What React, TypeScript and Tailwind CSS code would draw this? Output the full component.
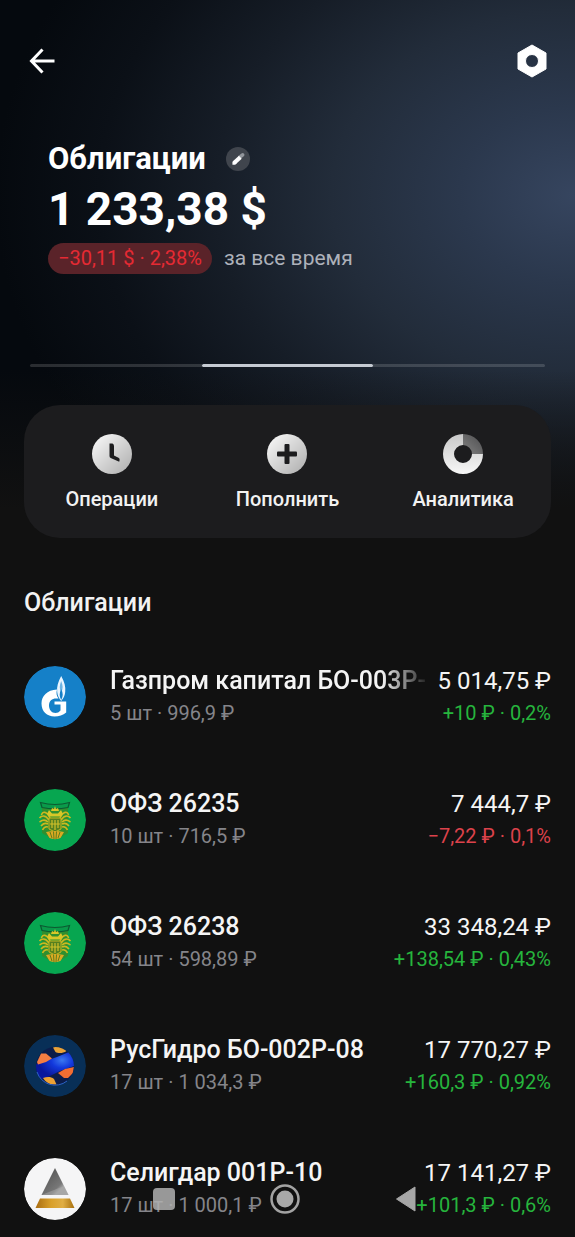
import { ReactNode } from "react";
import clsx from "clsx";

type Bond = {
  name: string;
  details: string;
  value: string;
  change: string;
  positive: boolean;
  longName?: boolean;
  logo: ReactNode;
};

function GazpromLogo() {
  return (
    <svg viewBox="0 0 62 62" className="size-full" aria-hidden="true">
      <circle cx="31" cy="31" r="31" fill="#1580c8" />
      <path
        d="M33 23.500C23 24 17.500 30 17.500 37.500C17.500 45.500 23 50.500 30.500 50.500C35 50.500 39 49 42.200 46.500V35.500H30.500V38.500H36.500V44.500C35 46.200 33.500 47 31.500 47C27.500 47 25 43.500 25 39.500C25 35 28 32.500 32 32.500H34.500C32.500 30 32 27 33 23.500Z"
        fill="#fff"
      />
      <path
        d="M37.200 10C40.500 16 41.800 20.500 41.200 26C40.800 30 39.500 32.500 37.200 35C34.900 32.500 33.600 30 33.200 26C32.600 20.500 34 16 37.200 10Z"
        fill="#e9f5ff"
      />
      <path d="M37.200 15C39 19.500 39.200 23 37.200 26C35.200 23 35.400 19.500 37.200 15Z" fill="#6bb3e2" />
      <path d="M37.200 23C39.200 27 39.200 30.500 37.200 34C35.200 30.500 35.200 27 37.200 23Z" fill="#1580c8" />
    </svg>
  );
}

function MinfinLogo() {
  return (
    <svg viewBox="0 0 62 62" className="size-full" aria-hidden="true">
      <circle cx="31" cy="31" r="31" fill="#07a650" />
      {/* shield and ribbon */}
      <path d="M18 15H44V44L37 48H25L18 44Z" fill="#2f8f2f" />
      <path
        d="M16.500 13.500Q31 17.500 45.500 13.500L44 18.500Q31 21 18 18.500Z"
        fill="#0a9a4a"
        stroke="#0b5a31"
        strokeWidth="1.200"
      />
      {/* wings */}
      <g fill="none" stroke="#cdb820" strokeWidth="1.600">
        <path d="M26 29C23 22 18 22 17.500 26M25 31C21 25 17 27 15.500 29M24 33C20 29 17 32 15.500 33M24 35C20 33 18 36 17 37M24 38C21 37 19 40 18.500 41" />
        <path d="M36 29C39 22 44 22 44.500 26M37 31C41 25 45 27 46.500 29M38 33C42 29 45 32 46.500 33M38 35C42 33 44 36 45 37M38 38C41 37 43 40 43.500 41" />
      </g>
      {/* crown and heads */}
      <path
        d="M27 22L28 19L30 20L31 17L32 20L34 19L35 22ZM23 25L25 21L28 24.500H34L37 21L39 25L37 27.500H25Z"
        fill="#d8c728"
      />
      <path d="M25 29H37V40L31 43L25 40Z" fill="#55801f" stroke="#c9b822" />
      <path d="M28 39V31M31 41V31M34 39V31M26 35H36" fill="none" stroke="#d2c02a" strokeWidth="1.200" />
      <path d="M22 43C28 41.500 34 41.500 40 43L36.500 49C33 50.500 29 50.500 25.500 49Z" fill="#dba922" />
      <path d="M26 43L28 49M29.500 42.500L30 50M32.500 42.500L32 50M36 43L34 49" stroke="#5f7d1c" />
    </svg>
  );
}

function RushydroLogo() {
  return (
    <svg viewBox="0 0 62 62" className="size-full" aria-hidden="true">
      <defs>
        <radialGradient id="rh-blue" cx="0.700" cy="0.350" r="0.600">
          <stop offset="0" stopColor="#3b78f0" />
          <stop offset="0.450" stopColor="#1238dc" />
          <stop offset="1" stopColor="#0a189c" />
        </radialGradient>
        <clipPath id="rh-ball">
          <circle cx="31" cy="31" r="19" />
        </clipPath>
      </defs>
      <circle cx="31" cy="31" r="31" fill="#082f57" />
      <g clipPath="url(#rh-ball)">
        <rect x="12" y="12" width="38" height="38" fill="#0c1c4a" />
        <path d="M10 30L33 22L50 15V31L36 36L20 44L10 42Z" fill="url(#rh-blue)" />
        <path d="M13 27L17 18.500H22L28 23.500L22 27L14 29.500Z" fill="#f57d42" />
        <path d="M29 12.500C34 11 39 12 42.500 16C39 18.500 34 18.500 31.500 17Z" fill="#e9a238" />
        <path d="M34 38L41 34L50 32L49 38L44 43H40Z" fill="#f16d32" />
        <path d="M19 43C23 41.500 27 41.500 30 44L32.500 49.500C27 50 22 48 19 43Z" fill="#eca134" />
      </g>
      <path d="M13 37A19 19 0 0 0 43 46" fill="none" stroke="#2d62c6" strokeWidth="1" />
    </svg>
  );
}

function SeligdarLogo() {
  return (
    <svg viewBox="0 0 62 62" className="size-full" aria-hidden="true">
      <defs>
        <linearGradient id="sel-gray" x1="0" y1="0" x2="1" y2="1">
          <stop offset="0.300" stopColor="#606060" />
          <stop offset="0.650" stopColor="#777" />
          <stop offset="0.750" stopColor="#a5a5a5" />
        </linearGradient>
        <linearGradient id="sel-gold">
          <stop offset="0" stopColor="#a96d12" />
          <stop offset="0.400" stopColor="#d9a02b" />
          <stop offset="0.700" stopColor="#e0ae45" />
          <stop offset="1" stopColor="#a8700f" />
        </linearGradient>
      </defs>
      <circle cx="31" cy="31" r="31" fill="#f5f5f6" />
      <path d="M31 10L44.500 37H17.500Z" fill="url(#sel-gray)" />
      <path d="M40 28L44.500 37H17.500Z" fill="#aaa" opacity="0.500" />
      <path d="M16 40.500H46L50.500 50H11.500Z" fill="url(#sel-gold)" />
    </svg>
  );
}

function ClockIcon() {
  return (
    <svg viewBox="0 0 40 40" className="size-10" aria-hidden="true">
      <defs>
        <linearGradient id="clock-fill" x1="0" y1="0" x2="1" y2="1">
          <stop offset="0.100" stopColor="#f4f4f4" />
          <stop offset="0.900" stopColor="#b4b4b4" />
        </linearGradient>
      </defs>
      <circle cx="20" cy="20" r="20" fill="url(#clock-fill)" />
      <path
        d="M17.500 9.500H20.500Q22 10 22 12V21.500L26.500 23.700Q28 24.500 27.600 26L27.200 27.800L18.700 24Q17.500 23.400 17.500 22Z"
        fill="#1c1c1e"
      />
    </svg>
  );
}

function PlusIcon() {
  return (
    <svg viewBox="0 0 40 40" className="size-10" aria-hidden="true">
      <defs>
        <linearGradient id="plus-fill" x1="0" y1="0" x2="1" y2="1">
          <stop offset="0.100" stopColor="#f4f4f4" />
          <stop offset="0.900" stopColor="#b4b4b4" />
        </linearGradient>
      </defs>
      <circle cx="20" cy="20" r="20" fill="url(#plus-fill)" />
      <rect x="17.500" y="10" width="5" height="20" rx="1" fill="#1c1c1e" />
      <rect x="10" y="17.500" width="20" height="5" rx="1" fill="#1c1c1e" />
    </svg>
  );
}

function ChartIcon() {
  return (
    <svg viewBox="0 0 40 40" className="size-10" aria-hidden="true">
      <defs>
        <linearGradient id="chart-fill" x1="0" y1="0" x2="0" y2="1">
          <stop offset="0" stopColor="#c8c8c8" />
          <stop offset="1" stopColor="#f7f7f7" />
        </linearGradient>
        <linearGradient id="chart-quarter" x1="0" y1="1" x2="1" y2="0">
          <stop offset="0" stopColor="#828282" />
          <stop offset="1" stopColor="#4c4c4e" />
        </linearGradient>
      </defs>
      <path d="M20 0A20 20 0 1 0 40 20H29A9 9 0 1 1 20 11Z" fill="url(#chart-fill)" />
      <path d="M20 0A20 20 0 0 1 40 20H29A9 9 0 0 0 20 11Z" fill="url(#chart-quarter)" />
    </svg>
  );
}

const actions = [
  { label: "Операции", icon: <ClockIcon /> },
  { label: "Пополнить", icon: <PlusIcon /> },
  { label: "Аналитика", icon: <ChartIcon /> },
];

const bonds: Bond[] = [
  {
    name: "Газпром капитал БО-003Р-",
    details: "5 шт · 996,9 ₽",
    value: "5 014,75 ₽",
    change: "+10 ₽ · 0,2%",
    positive: true,
    longName: true,
    logo: <GazpromLogo />,
  },
  {
    name: "ОФЗ 26235",
    details: "10 шт · 716,5 ₽",
    value: "7 444,7 ₽",
    change: "−7,22 ₽ · 0,1%",
    positive: false,
    logo: <MinfinLogo />,
  },
  {
    name: "ОФЗ 26238",
    details: "54 шт · 598,89 ₽",
    value: "33 348,24 ₽",
    change: "+138,54 ₽ · 0,43%",
    positive: true,
    logo: <MinfinLogo />,
  },
  {
    name: "РусГидро БО-002Р-08",
    details: "17 шт · 1 034,3 ₽",
    value: "17 770,27 ₽",
    change: "+160,3 ₽ · 0,92%",
    positive: true,
    logo: <RushydroLogo />,
  },
  {
    name: "Селигдар 001Р-10",
    details: "17 шт · 1 000,1 ₽",
    value: "17 141,27 ₽",
    change: "+101,3 ₽ · 0,6%",
    positive: true,
    logo: <SeligdarLogo />,
  },
];

function BondRow({ bond }: { bond: Bond }) {
  return (
    <li className="flex items-center">
      <div className="size-[62px] shrink-0 overflow-hidden rounded-full">{bond.logo}</div>
      <div className="ml-6 min-w-0 flex-1">
        <p
          className={clsx(
            "overflow-hidden text-[25px] leading-8 font-medium whitespace-nowrap text-[#f5f5f5]",
            bond.longName &&
              "[mask-image:linear-gradient(to_right,#000_calc(100%-48px),transparent)]",
          )}
        >
          {bond.name}
        </p>
        <p className="text-xl leading-8 whitespace-nowrap text-[#85858a]">{bond.details}</p>
      </div>
      <div className="ml-2 text-right whitespace-nowrap">
        <p className="text-2xl leading-8 text-[#f5f5f5]">{bond.value}</p>
        <p
          className={clsx(
            "text-xl leading-8",
            bond.positive ? "text-[#26b53d]" : "text-[#dc424b]",
          )}
        >
          {bond.change}
        </p>
      </div>
    </li>
  );
}

export default function App() {
  return (
    <div className="min-h-screen bg-[#111111] font-['Roboto',sans-serif] text-white">
      <div className="bg-[linear-gradient(to_bottom,transparent_370px,#111111_510px),radial-gradient(ellipse_580px_440px_at_100%_195px,#36455f_0%,#2b384d_20%,#222c3a_42%,#161d27_62%,#0b1017_82%,#05090e_100%)] px-6 pt-10">
        <header className="flex h-[42px] items-center justify-between">
          <button type="button" aria-label="Назад" className="ml-[5px]">
            <svg viewBox="0 0 26 26" className="size-[26px]" aria-hidden="true">
              <path
                d="M13.500 1.500L2.500 13L13.500 24.500M2.500 13H25.500"
                fill="none"
                stroke="#fff"
                strokeWidth="3"
              />
            </svg>
          </button>
          <button type="button" aria-label="Настройки" className="mr-1">
            <svg viewBox="0 0 30 34" className="h-[34px] w-[30px]" aria-hidden="true">
              <path
                d="M15 1L29 9V25L15 33L1 25V9ZM15 10.500A6.500 6.500 0 1 0 15 23.500A6.500 6.500 0 1 0 15 10.500Z"
                fill="#fff"
                stroke="#fff"
                strokeWidth="1"
                strokeLinejoin="round"
                fillRule="evenodd"
              />
            </svg>
          </button>
        </header>

        <section className="mt-[61px] px-6">
          <div className="flex items-center gap-5">
            <h1 className="text-[31px] leading-8 font-bold">Облигации</h1>
            <button
              type="button"
              aria-label="Переименовать"
              className="size-6 rounded-full bg-[#40454d]"
            >
              <svg viewBox="0 0 26 26" className="size-6" aria-hidden="true">
                <path d="M15 11L18 8.500" stroke="#92969c" strokeWidth="4" strokeLinecap="round" />
                <path d="M9 17L15.500 11" stroke="#fff" strokeWidth="4.500" />
                <path d="M7 19.200V16L9 14.500L11.500 17.500L10 19.200Z" fill="#fff" />
              </svg>
            </button>
          </div>
          <p className="mt-1.5 text-[46px] leading-[56px] font-bold">1 233,38 $</p>
          <div className="mt-1.5 flex items-center gap-3 text-xl">
            <span className="rounded-full bg-[#5a2329] px-2.5 leading-[31px] text-[#e52a33]">
              −30,11 $ · 2,38%
            </span>
            <span className="text-[21px] leading-[31px] text-[#adb1ba]">за все время</span>
          </div>
        </section>

        <div className="mx-1.5 mt-[90px] flex h-[3px]">
          <span className="flex-1 rounded-l-full bg-white/15" />
          <span className="flex-1 rounded-full bg-[#c5cad2]" />
          <span className="flex-1 rounded-r-full bg-white/15" />
        </div>

        <nav className="mt-[38px] grid grid-cols-3 rounded-[36px] bg-[#1c1c1e] pt-[29px] pb-[27px]">
          {actions.map((action) => (
            <button
              key={action.label}
              type="button"
              className="flex flex-col items-center gap-[13px] text-xl leading-6 font-medium text-[#f2f2f2]"
            >
              {action.icon}
              {action.label}
            </button>
          ))}
        </nav>
      </div>

      <main className="px-6 pt-[49px] pb-[18px]">
        <h2 className="text-[25px] leading-8 font-medium text-[#f2f2f2]">Облигации</h2>
        <ul className="mt-[46px] flex flex-col gap-[59px]">
          {bonds.map((bond) => (
            <BondRow key={bond.name} bond={bond} />
          ))}
        </ul>
      </main>

      {/* system navigation */}
      <div className="fixed inset-x-0 bottom-0 flex h-[76px] items-center justify-center pr-1.5">
        <button type="button" aria-label="Недавние" className="flex w-[121px] justify-center">
          <span className="size-[22px] rounded-sm bg-[#b0b0b0]/85" />
        </button>
        <button type="button" aria-label="Домой" className="flex w-[121px] justify-center">
          <svg viewBox="0 0 30 30" className="size-[30px]" aria-hidden="true">
            <circle cx="15" cy="15" r="13.500" fill="none" stroke="#a3a3a3" strokeWidth="2.500" />
            <circle cx="15" cy="15" r="8.500" fill="#a9a9a9" />
          </svg>
        </button>
        <button type="button" aria-label="Назад в системе" className="flex w-[121px] justify-center">
          <svg viewBox="0 0 20 26" className="h-[26px] w-5" aria-hidden="true">
            <path d="M0.500 13L19 1V25Z" fill="#a6a6a6" stroke="#a6a6a6" strokeLinejoin="round" />
          </svg>
        </button>
      </div>
    </div>
  );
}
